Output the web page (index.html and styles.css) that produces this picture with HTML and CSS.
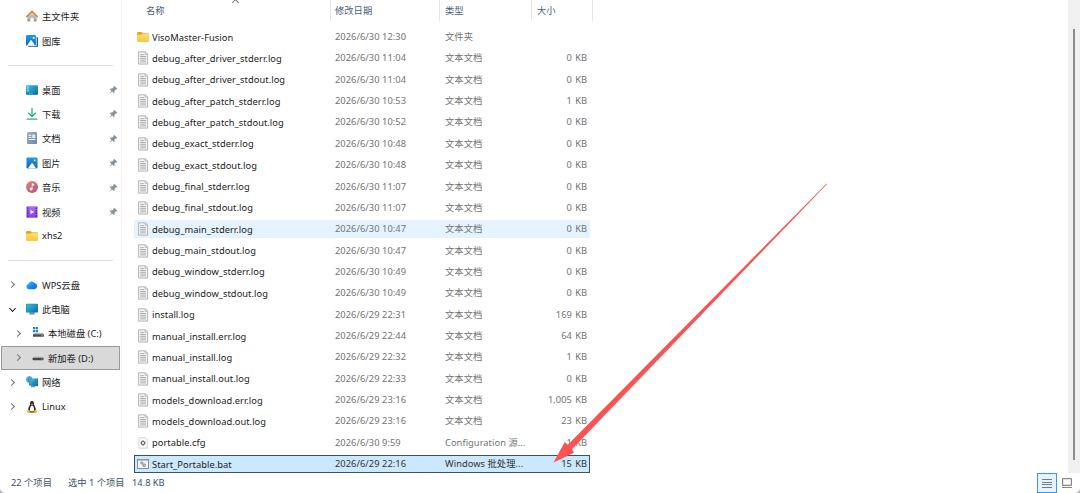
FILE: index.html
```html
<!DOCTYPE html>
<html lang="zh-CN">
<head>
    <meta charset="UTF-8">
    <meta name="viewport" content="width=device-width, initial-scale=1.0">
    <title>新加卷 (D:)</title>
    <link rel="stylesheet" href="styles.css">
</head>
<body>
    <!-- 图标定义 -->
    <svg class="defs" width="0" height="0">
        <linearGradient id="g-screen" x1="0" y1="0" x2="1" y2="1"><stop offset="0" stop-color="#35c3dc"/><stop offset="1" stop-color="#1268a8"/></linearGradient>
        <linearGradient id="g-blue" x1="0" y1="0" x2="0" y2="1"><stop offset="0" stop-color="#1f9be6"/><stop offset="1" stop-color="#0b67bd"/></linearGradient>
        <linearGradient id="g-music" x1="0" y1="0" x2="1" y2="1"><stop offset="0" stop-color="#ee8560"/><stop offset="1" stop-color="#a85494"/></linearGradient>
        <linearGradient id="g-folder" x1="0" y1="0" x2="0" y2="1"><stop offset="0" stop-color="#ffdf78"/><stop offset="1" stop-color="#fbc63c"/></linearGradient>
        <linearGradient id="g-gray" x1="0" y1="0" x2="0" y2="1"><stop offset="0" stop-color="#dcdcdc"/><stop offset="1" stop-color="#999"/></linearGradient>
        <linearGradient id="g-doc" x1="0" y1="0" x2="1" y2="1"><stop offset="0" stop-color="#a0b4cb"/><stop offset="1" stop-color="#6d86a5"/></linearGradient>
        <linearGradient id="g-video" x1="0" y1="0" x2="0" y2="1"><stop offset="0" stop-color="#b06ff2"/><stop offset="1" stop-color="#8144dc"/></linearGradient>
        <linearGradient id="g-cloud" x1="0" y1="0" x2="1" y2="1"><stop offset="0" stop-color="#28d5f5"/><stop offset=".5" stop-color="#168df8"/><stop offset="1" stop-color="#145ee8"/></linearGradient>
        <symbol id="i-home" viewBox="0 0 12 12"><path d="M1.3 5.5 6 1.5l4.7 4v5.2q0 .8-.8.8H7.7V7.7H4.4v3.8H2.1q-.8 0-.8-.8z" fill="url(#g-gray)"/><path d="M.7 6.5 6 1.3l5.3 5.2" fill="none" stroke="#e47a2c" stroke-width="1.4" stroke-linecap="round" stroke-linejoin="round"/></symbol>
        <symbol id="i-gallery" viewBox="0 0 12 12"><rect x="2" y="2" width="10" height="10" rx="1" fill="#1865b2"/><rect width="10.6" height="11.2" rx="1" fill="#fff"/><rect width="9.9" height="10.8" rx="1" fill="url(#g-blue)"/><path d="M.8 10.8 4.5 5.4q.6-.7 1.2 0l3.6 5.4z" fill="#fff"/><circle cx="7.6" cy="3" r="1" fill="#fff"/></symbol>
        <symbol id="i-desktop" viewBox="0 0 12 12"><rect y="1.3" width="12" height="9.4" rx="1" fill="url(#g-screen)"/><path d="M1.4 3.2h1.2M1.4 5h1.2M1.4 6.8h1.2" stroke="#fff" stroke-width="1"/><path d="M.2 9.7h11.6" stroke="#0870a5" stroke-width="1.2"/><path d="M3.2 9.5h1.2m1 0h1.2" stroke="#6bd4e6" stroke-width=".8"/></symbol>
        <symbol id="i-download" viewBox="0 0 12 12"><path d="M6 .5v7.8M2.7 5.2 6 8.5l3.3-3.3M1.4 11.2h9.3" fill="none" stroke="#22b28d" stroke-width="1.3" stroke-linecap="round" stroke-linejoin="round"/></symbol>
        <symbol id="i-docs" viewBox="0 0 12 12"><rect x="1" width="10" height="12" rx="1" fill="url(#g-doc)"/><path d="M2.8 3.4h2.4M2.8 5.4h2.4M2.8 7.5h6.4" stroke="#fff" stroke-width="1"/><rect x="6.2" y="2.6" width="3" height="3.4" fill="#e5edf5"/></symbol>
        <symbol id="i-pic" viewBox="0 0 12 12"><rect x=".5" y=".6" width="11" height="10.8" rx="1" fill="url(#g-blue)"/><path d="M1.8 11.4 5.4 6.6q.7-.8 1.4 0l3.4 4.8z" fill="#fff"/><circle cx="8.7" cy="3.3" r=".9" fill="#fff"/></symbol>
        <symbol id="i-music" viewBox="0 0 12 12"><circle cx="6" cy="6" r="6" fill="url(#g-music)"/><circle cx="5.2" cy="8" r="1.4" fill="#fff"/><path d="M6.2 8V2.6l1.6.6v1.2l-1.6-.5" fill="#fff" stroke="#fff" stroke-width=".6"/></symbol>
        <symbol id="i-video" viewBox="0 0 12 12"><rect x=".4" y=".2" width="11.2" height="11.6" rx="1" fill="url(#g-video)"/><path d="M1.8 1.4v10M10.2 1.4v10" stroke="#542199" stroke-width="1.3" stroke-dasharray="1.5 1.1"/><path d="M4.5 3.9v4.2L8 6z" fill="#fff"/></symbol>
        <symbol id="i-folder" viewBox="0 0 12 12"><path d="M0 2q0-1 1-1h3.2q.5 0 .9.5l.9.8h5q1 0 1 1v5H0z" fill="#e9a51e"/><path d="M0 4.4q0-.7.8-.7h3.6l1.3-.9H11q1 0 1 1V10q0 .9-1 .9H1q-1 0-1-.9z" fill="url(#g-folder)"/></symbol>
        <symbol id="i-cloud" viewBox="0 0 12 12"><path d="M2.8 10.2a2.6 2.6 0 0 1-.5-5.1A3.6 3.6 0 0 1 8.7 4a3.2 3.2 0 0 1 .1 6.2z" fill="url(#g-cloud)"/></symbol>
        <symbol id="i-pc" viewBox="0 0 12 12"><path d="M3.5 10.9h5V9h-5z" fill="#7f98a8"/><rect x="0" y=".8" width="12" height="8.8" rx=".6" fill="#1b7fac"/><rect x=".5" y="1.3" width="11" height="7.8" fill="url(#g-screen)"/><path d="M3 11.2h6" stroke="#6d8798" stroke-width=".7"/></symbol>
        <symbol id="i-windisk" viewBox="0 0 12 12"><path d="M1 0h2.2v2.3H1zM3.8 0H6v2.3H3.8zM1 2.9h2.2v2.3H1zM3.8 2.9H6v2.3H3.8z" fill="#1487df"/><path d="M2 6h9l.8 1.5H1z" fill="#b5b5b5"/><path d="M1 7.2h10.8v2.5H1z" fill="#4c4c4c"/><path d="M9.5 8.4h1" stroke="#76d679"/></symbol>
        <symbol id="i-disk" viewBox="0 0 12 12"><path d="M1.8 4.5h8.5l1.2 1.7H.6z" fill="#c3c3c3"/><rect x=".6" y="5.7" width="10.9" height="2.5" rx=".4" fill="#454545"/><path d="M9.3 7h1" stroke="#8cc893"/></symbol>
        <symbol id="i-net" viewBox="0 0 12 12"><path d="M5 11.3h4.2V9H5z" fill="#6f96a8"/><path d="M3 3l9-.8v8L3 9.6z" fill="url(#g-screen)"/><circle cx="3.5" cy="3.6" r="3.4" fill="#5bb8d4"/><path d="M.4 3h6M1 5.3h4.8M3.4.2Q1 3.5 3.4 7M3.5.2Q6 3.5 3.5 7" fill="none" stroke="#277fa5" stroke-width=".5"/></symbol>
        <symbol id="i-linux" viewBox="0 0 12 12"><path d="M6 0C4.2 0 4 1.5 4.1 3.3 4 4.5 2 6.4 2 9q0 2 2 2.5h4q2-.5 2-2.5c0-2.6-2-4.5-2.1-5.7C8 1.5 7.8 0 6 0z" fill="#262626"/><path d="M5 4.8h2Q8.4 7 8.2 9.4 6 11.5 3.8 9.4 3.7 7 5 4.8z" fill="#fff"/><path d="M4.8 3 6 2.5 7.2 3 6 4.2z" fill="#f3b21c"/><path d="m1 10.2 1.5-2 2 2.9q-.4 1.2-2 .8L1 11.3zm10 0-1.5-2-2 2.9q.4 1.2 2 .8l1.5-.6z" fill="#f4b421"/></symbol>
        <symbol id="i-pin" viewBox="0 0 10 10"><path d="m5.7.9 3.5 3.3-.8.7-.6-.1-1.7 1.7.1 1.8-.9.7L3.5 7.2.8 9.3l-.2-.2 2.1-2.7L.9 4.7l.7-.9 1.9.1L5.3 2.2l-.2-.7z" fill="#87919a"/></symbol>
        <symbol id="i-log" viewBox="0 0 12 14"><path d="M1.6.8h6.8l2.2 2.3v10H1.6z" fill="#f5f5f5" stroke="#a3a3a3" stroke-width=".8"/><path d="M8.2.8v2.5h2.4" fill="none" stroke="#a3a3a3" stroke-width=".7"/><path d="M3.2 3.7h4M3.2 5.5h5.9M3.2 7.3h5.9M3.2 9.1h5.9M3.2 10.9h5.9" stroke="#9a9a9a" stroke-width=".8"/></symbol>
        <symbol id="i-cfg" viewBox="0 0 12 14"><path d="M2 1.7h6.3l2 2v8.5H2z" fill="#fafafa" stroke="#c8c8c8" stroke-width=".7"/><circle cx="6" cy="7" r="1.7" fill="#fff" stroke="#62727d" stroke-width="1.2"/><path d="M6 4.3v1M6 8.8v1M3.4 7h1M7.7 7h1" stroke="#62727d"/></symbol>
        <symbol id="i-bat" viewBox="0 0 12 14"><rect x=".4" y="2.4" width="11.2" height="9" fill="#f3f3f3" stroke="#777" stroke-width=".8"/><path d="M.8 3.3h10.4" stroke="#b5b5b5"/><circle cx="4.8" cy="5.9" r="1.1" fill="#ccc" stroke="#8a8a8a" stroke-width=".9"/><circle cx="7.2" cy="8.3" r="1.4" fill="#ccc" stroke="#8a8a8a" stroke-width="1"/></symbol>
    </svg>

    <div class="window">
        <div class="main">
            <!-- 左侧导航 -->
            <nav class="sidebar">
                <div class="nav-item"><svg class="icon"><use href="#i-home"/></svg><span>主文件夹</span></div>
                <div class="nav-item"><svg class="icon"><use href="#i-gallery"/></svg><span>图库</span></div>
                <div class="separator"></div>
                <div class="nav-item"><svg class="icon"><use href="#i-desktop"/></svg><span>桌面</span><svg class="pin"><use href="#i-pin"/></svg></div>
                <div class="nav-item"><svg class="icon"><use href="#i-download"/></svg><span>下载</span><svg class="pin"><use href="#i-pin"/></svg></div>
                <div class="nav-item"><svg class="icon"><use href="#i-docs"/></svg><span>文档</span><svg class="pin"><use href="#i-pin"/></svg></div>
                <div class="nav-item"><svg class="icon"><use href="#i-pic"/></svg><span>图片</span><svg class="pin"><use href="#i-pin"/></svg></div>
                <div class="nav-item"><svg class="icon"><use href="#i-music"/></svg><span>音乐</span><svg class="pin"><use href="#i-pin"/></svg></div>
                <div class="nav-item"><svg class="icon"><use href="#i-video"/></svg><span>视频</span><svg class="pin"><use href="#i-pin"/></svg></div>
                <div class="nav-item"><svg class="icon"><use href="#i-folder"/></svg><span>xhs2</span></div>
                <div class="separator"></div>
                <div class="nav-item tree"><i class="chevron"></i><svg class="icon"><use href="#i-cloud"/></svg><span>WPS云盘</span></div>
                <div class="nav-item tree"><i class="chevron open"></i><svg class="icon"><use href="#i-pc"/></svg><span>此电脑</span></div>
                <div class="nav-item tree child"><i class="chevron"></i><svg class="icon"><use href="#i-windisk"/></svg><span>本地磁盘 (C:)</span></div>
                <div class="nav-item tree child current"><i class="chevron"></i><svg class="icon"><use href="#i-disk"/></svg><span>新加卷 (D:)</span></div>
                <div class="nav-item tree"><i class="chevron"></i><svg class="icon"><use href="#i-net"/></svg><span>网络</span></div>
                <div class="nav-item tree"><i class="chevron"></i><svg class="icon"><use href="#i-linux"/></svg><span>Linux</span></div>
            </nav>

            <!-- 文件列表 -->
            <div class="files">
                <div class="columns">
                    <div class="col">名称<i class="sort"></i></div>
                    <div class="col">修改日期</div>
                    <div class="col">类型</div>
                    <div class="col">大小</div>
                </div>
                <div class="rows">
                    <div class="row"><svg class="icon"><use href="#i-folder"/></svg><b>VisoMaster-Fusion</b><span>2026/6/30 12:30</span><span>文件夹</span><em></em></div>
                    <div class="row"><svg class="file"><use href="#i-log"/></svg><b>debug_after_driver_stderr.log</b><span>2026/6/30 11:04</span><span>文本文档</span><em>0 KB</em></div>
                    <div class="row"><svg class="file"><use href="#i-log"/></svg><b>debug_after_driver_stdout.log</b><span>2026/6/30 11:04</span><span>文本文档</span><em>0 KB</em></div>
                    <div class="row"><svg class="file"><use href="#i-log"/></svg><b>debug_after_patch_stderr.log</b><span>2026/6/30 10:53</span><span>文本文档</span><em>1 KB</em></div>
                    <div class="row"><svg class="file"><use href="#i-log"/></svg><b>debug_after_patch_stdout.log</b><span>2026/6/30 10:52</span><span>文本文档</span><em>0 KB</em></div>
                    <div class="row"><svg class="file"><use href="#i-log"/></svg><b>debug_exact_stderr.log</b><span>2026/6/30 10:48</span><span>文本文档</span><em>0 KB</em></div>
                    <div class="row"><svg class="file"><use href="#i-log"/></svg><b>debug_exact_stdout.log</b><span>2026/6/30 10:48</span><span>文本文档</span><em>0 KB</em></div>
                    <div class="row"><svg class="file"><use href="#i-log"/></svg><b>debug_final_stderr.log</b><span>2026/6/30 11:07</span><span>文本文档</span><em>0 KB</em></div>
                    <div class="row"><svg class="file"><use href="#i-log"/></svg><b>debug_final_stdout.log</b><span>2026/6/30 11:07</span><span>文本文档</span><em>0 KB</em></div>
                    <div class="row hover"><svg class="file"><use href="#i-log"/></svg><b>debug_main_stderr.log</b><span>2026/6/30 10:47</span><span>文本文档</span><em>0 KB</em></div>
                    <div class="row"><svg class="file"><use href="#i-log"/></svg><b>debug_main_stdout.log</b><span>2026/6/30 10:47</span><span>文本文档</span><em>0 KB</em></div>
                    <div class="row"><svg class="file"><use href="#i-log"/></svg><b>debug_window_stderr.log</b><span>2026/6/30 10:49</span><span>文本文档</span><em>0 KB</em></div>
                    <div class="row"><svg class="file"><use href="#i-log"/></svg><b>debug_window_stdout.log</b><span>2026/6/30 10:49</span><span>文本文档</span><em>0 KB</em></div>
                    <div class="row"><svg class="file"><use href="#i-log"/></svg><b>install.log</b><span>2026/6/29 22:31</span><span>文本文档</span><em>169 KB</em></div>
                    <div class="row"><svg class="file"><use href="#i-log"/></svg><b>manual_install.err.log</b><span>2026/6/29 22:44</span><span>文本文档</span><em>64 KB</em></div>
                    <div class="row"><svg class="file"><use href="#i-log"/></svg><b>manual_install.log</b><span>2026/6/29 22:32</span><span>文本文档</span><em>1 KB</em></div>
                    <div class="row"><svg class="file"><use href="#i-log"/></svg><b>manual_install.out.log</b><span>2026/6/29 22:33</span><span>文本文档</span><em>0 KB</em></div>
                    <div class="row"><svg class="file"><use href="#i-log"/></svg><b>models_download.err.log</b><span>2026/6/29 23:16</span><span>文本文档</span><em>1,005 KB</em></div>
                    <div class="row"><svg class="file"><use href="#i-log"/></svg><b>models_download.out.log</b><span>2026/6/29 23:16</span><span>文本文档</span><em>23 KB</em></div>
                    <div class="row"><svg class="file"><use href="#i-cfg"/></svg><b>portable.cfg</b><span>2026/6/30 9:59</span><span>Configuration 源...</span><em>1 KB</em></div>
                    <div class="row selected"><svg class="file"><use href="#i-bat"/></svg><b>Start_Portable.bat</b><span>2026/6/29 22:16</span><span>Windows 批处理...</span><em>15 KB</em></div>
                </div>
            </div>

            <div class="scrollbar"><div class="thumb"></div></div>
        </div>

        <!-- 状态栏 -->
        <div class="statusbar">
            <span class="total">22 个项目</span>
            <span class="chosen">选中 1 个项目</span>
            <span class="size">14.8 KB</span>
            <div class="views">
                <div class="view active"><svg width="10" height="10" viewBox="0 0 10 10"><path d="M0 1.5h10M0 4.5h10M0 6.5h10M0 9.5h10" stroke="#727b82" stroke-width="1"/></svg></div>
                <div class="view"><svg width="10" height="10" viewBox="0 0 10 10"><rect x=".6" y=".6" width="8.8" height="6.8" rx=".6" fill="#fff" stroke="#858585" stroke-width="1.2"/><path d="M0 9.5h10" stroke="#858585"/></svg></div>
            </div>
        </div>
    </div>

    <!-- 红色箭头 -->
    <svg class="arrow" width="1080" height="493" viewBox="0 0 1080 493">
        <path d="M553.5 462.5 564.8 442l3 2.8L826.6 183.6l.5.5L572 449.2l1.9 3.6z" fill="#fb5353"/>
    </svg>
</body>
</html>
```

FILE: styles.css
```css
body {
    margin: 0;
    height: 493px;
    overflow: hidden;
    position: relative;
    background: #b5b5b5;
    font-family: "Noto Sans", "Noto Sans CJK SC", sans-serif;
    font-size: 9.3px;
    color: #1a1a1a;
}

.defs {
    position: absolute;
}

.window {
    height: 493px;
    display: flex;
    flex-direction: column;
    background: #fff;
    border-radius: 0 0 5px 5px;
    overflow: hidden;
}

.main {
    height: 473px;
    display: flex;
}

/* 左侧导航 */
.sidebar {
    width: 122px;
    box-sizing: border-box;
    padding-top: 4.2px;
    border-right: 1px solid #f5f5f5;
}

.nav-item {
    display: flex;
    align-items: center;
    height: 24.4px;
    box-sizing: border-box;
    padding: 0 3px 0 26px;
    white-space: nowrap;
}

.icon {
    flex: none;
    width: 12px;
    height: 12px;
    margin-right: 4px;
}

.pin {
    width: 9px;
    height: 9px;
    margin-left: auto;
}

.separator {
    height: 24.4px;
    margin: 0 8px;
    display: flex;
    align-items: center;
}

.separator::before {
    content: "";
    flex: 1;
    height: 1px;
    background: #dcdcdc;
}

.tree {
    padding-left: 8px;
}

.tree.child {
    padding-left: 14px;
}

.chevron {
    width: 5px;
    height: 5px;
    box-sizing: border-box;
    margin: 0 12px 0 1px;
    border: solid #777;
    border-width: 1px 1px 0 0;
    transform: rotate(45deg);
}

.chevron.open {
    border-color: #222;
    transform: translate(1px, -1px) rotate(135deg);
}

.tree.current {
    margin: 0 1px;
    padding-left: 12px;
    background: #d9d9d9;
    border: 1px solid #999;
}

/* 文件列表 */
.files {
    flex: 1;
    padding-left: 12px;
}

.columns {
    display: grid;
    grid-template-columns: 197px 109px 92px 61px;
    height: 20px;
    color: #4c607a;
}

.col {
    position: relative;
    box-sizing: border-box;
    padding-left: 5px;
    line-height: 21px;
    border-right: 1px solid #e5e5e5;
}

.col:first-child {
    padding-left: 12px;
}

.col:nth-child(2) {
    padding-left: 4px;
}

/* 排序箭头 */
.sort {
    position: absolute;
    left: 99px;
    top: 0;
    width: 4px;
    height: 4px;
    border: solid #777;
    border-width: 1px 0 0 1px;
    transform: rotate(45deg);
}

.rows {
    display: flex;
    flex-direction: column;
    gap: 3.36px;
    width: 456px;
    padding-top: 8px;
}

.row {
    display: grid;
    grid-template-columns: 18px 183px 110px 92px 50px;
    align-items: center;
    height: 18px;
    color: #737373;
    white-space: nowrap;
}

.row .icon,
.row .file {
    margin: 0 0 0 3px;
}

.file {
    width: 12px;
    height: 14px;
}

.row b {
    font-weight: normal;
    letter-spacing: 0.05px;
    color: #1a1a1a;
}

.row span {
    letter-spacing: 0.05px;
}

.row em {
    font-style: normal;
    text-align: right;
    word-spacing: 1px;
}

.row span,
.row em {
    line-height: 12px;
}

.hover {
    background: #e5f3ff;
}

.selected {
    background: #cce8ff;
    outline: 1px solid #34536b;
    outline-offset: -1px;
    color: #333;
}

/* 滚动条 */
.scrollbar {
    width: 12px;
    box-sizing: border-box;
    padding: 29px 5px 13px;
    background: #f0f0f0;
}

.thumb {
    width: 2px;
    height: 431px;
    background: #8d8d8d;
}

/* 状态栏 */
.statusbar {
    display: flex;
    height: 20px;
    padding-left: 11px;
    line-height: 20px;
    color: #3c5068;
}

.total {
    width: 57px;
}

.chosen {
    width: 64px;
}

.views {
    display: flex;
    margin-left: auto;
    margin-right: 3px;
}

.view {
    display: flex;
    align-items: center;
    justify-content: center;
    width: 20px;
    height: 20px;
    box-sizing: border-box;
}

.active {
    background: #e5f3fc;
    border: 1px solid #3b99df;
}

.arrow {
    position: absolute;
    left: 0;
    top: 0;
}
```
